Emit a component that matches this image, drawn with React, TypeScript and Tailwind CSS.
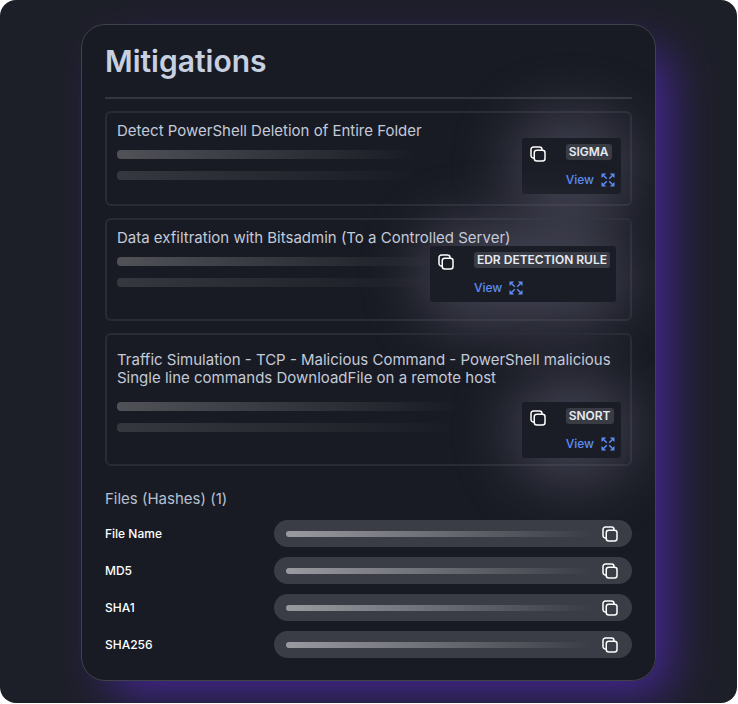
import React from 'react';
import clsx from 'clsx';

interface Mitigation {
  id: string;
  title: string;
  rule: string;
  cardClass: string;
  barsClass: string;
  barClass: string;
  popClass: string;
}

const MITIGATIONS: Mitigation[] = [
  {
    id: 'sigma',
    title: 'Detect PowerShell Deletion of Entire Folder',
    rule: 'SIGMA',
    cardClass: 'pt-[9px] pb-6',
    barsClass: 'mt-2.5',
    barClass: 'w-[300px]',
    popClass: 'right-[9px] top-[25px]',
  },
  {
    id: 'edr',
    title: 'Data exfiltration with Bitsadmin (To a Controlled Server)',
    rule: 'EDR DETECTION RULE',
    cardClass: 'pt-[9px] pb-8',
    barsClass: 'mt-2.5',
    barClass: 'w-[320px]',
    popClass: 'right-3.5 top-[26px]',
  },
  {
    id: 'snort',
    title:
      'Traffic Simulation - TCP - Malicious Command - PowerShell malicious Single line commands DownloadFile on a remote host',
    rule: 'SNORT',
    cardClass: 'pt-4 pb-8',
    barsClass: 'mt-[15px]',
    barClass: 'w-[345px]',
    popClass: 'right-[9px] top-[67px]',
  },
];

const HASHES = ['File Name', 'MD5', 'SHA1', 'SHA256'];

function CopyIcon() {
  return (
    <svg className="w-4 h-4" fill="none" stroke="currentColor" viewBox="0 0 16 16" strokeWidth={1.5} strokeLinecap="round" strokeLinejoin="round">
      <rect x="4.25" y="4.25" width="10.75" height="10.75" rx="2.5" />
      <path d="M12 4V3.5A2.5 2.5 0 0 0 9.5 1h-6A2.5 2.5 0 0 0 1 3.5v6A2.5 2.5 0 0 0 3.5 12H4" />
    </svg>
  );
}

function ExpandIcon() {
  return (
    <svg className="w-3.5 h-3.5" fill="none" stroke="currentColor" viewBox="0 0 14 14" strokeWidth={1.4}>
      {/* Arrow heads */}
      <path
        fill="currentColor"
        stroke="none"
        d="M.5.5h4.6L3.7 1.9 1.9 3.7.5 5.1zM13.5.5v4.6l-1.4-1.4-1.8-1.8L8.9.5zM13.5 13.5H8.9l1.4-1.4 1.8-1.8 1.4-1.4zM.5 13.5V8.9l1.4 1.4 1.8 1.8 1.4 1.4z"
      />
      {/* Shafts */}
      <path d="M2.5 2.5 5.8 5.8M11.5 2.5 8.2 5.8M11.5 11.5 8.2 8.2M2.5 11.5 5.8 8.2" />
    </svg>
  );
}

function RulePopover({ rule, className }: { rule: string; className: string }) {
  return (
    <div className={clsx('absolute', className)}>
      {/* Soft light behind the box */}
      <div className="absolute -inset-x-3 -inset-y-6 rounded-full bg-[#706f84]/45 blur-[28px]" />
      <div className="relative flex gap-5 h-14 rounded-[3px] bg-[#1b1d26] pl-2 pr-1.5 pt-1.5">
        <button type="button" aria-label={`Copy ${rule}`} className="self-start mt-0.5 text-white">
          <CopyIcon />
        </button>
        <div className="flex flex-col items-start gap-3">
          <span className="rounded-[3px] bg-[#3a3c45] px-[3px] text-xs leading-4 font-semibold text-[#e8eaf2]">
            {rule}
          </span>
          <a href="#" className="flex items-center gap-[7px] text-xs leading-4 font-medium text-[#5b8df5]">
            View
            <ExpandIcon />
          </a>
        </div>
      </div>
    </div>
  );
}

function MitigationCard({ item }: { item: Mitigation }) {
  return (
    <article className={clsx('relative rounded-md border-2 border-[#292b35] px-2.5', item.cardClass)}>
      <h2 className="relative z-10 text-[15px] leading-[18px] text-[#c3cad8]">{item.title}</h2>
      <div className={clsx('flex flex-col gap-3', item.barsClass)}>
        <div className={clsx('h-[9px] max-w-full rounded-sm bg-linear-to-r from-[#505258] to-transparent', item.barClass)} />
        <div className={clsx('h-[9px] max-w-full rounded-sm bg-linear-to-r from-[#36383f] to-transparent', item.barClass)} />
      </div>
      <RulePopover rule={item.rule} className={item.popClass} />
    </article>
  );
}

function HashRow({ label }: { label: string }) {
  return (
    <div className="flex items-center">
      <span className="w-[169px] shrink-0 text-xs leading-5 font-medium text-white">{label}</span>
      <div className="flex flex-1 items-center justify-between h-[27px] rounded-full bg-[#3b3d46] pl-3 pr-3.5">
        <div className="h-1.5 w-[305px] rounded-full bg-linear-to-r from-[#9a9ba1] to-transparent" />
        <button type="button" aria-label={`Copy ${label}`} className="text-white">
          <CopyIcon />
        </button>
      </div>
    </div>
  );
}

export default function App() {
  return (
    <div className="bg-white pr-px pb-px font-[Inter,sans-serif]">
      <main className="overflow-hidden rounded-2xl bg-[#1d1f28] px-[81px] pt-6 pb-[22px]">
        <div className="rounded-3xl shadow-[20px_20px_48px_-8px_#472899]">
          <section className="relative isolate overflow-hidden rounded-3xl border border-[#40424a] bg-[#191b24] px-[23px] pt-4 pb-[22px]">
            <h1 className="pb-4 text-[30px] leading-10 font-semibold text-[#c6d0e0] border-b-2 border-[#34363e]">
              Mitigations
            </h1>

            <div className="flex flex-col gap-3 mt-3">
              {MITIGATIONS.map((item) => (
                <MitigationCard key={item.id} item={item} />
              ))}
            </div>

            <h2 className="mt-[23px] mb-[11px] text-[15px] leading-5 text-[#b6c0d0]">Files (Hashes) (1)</h2>
            <div className="relative flex flex-col gap-2.5">
              {HASHES.map((label) => (
                <HashRow key={label} label={label} />
              ))}
            </div>
          </section>
        </div>
      </main>
    </div>
  );
}
